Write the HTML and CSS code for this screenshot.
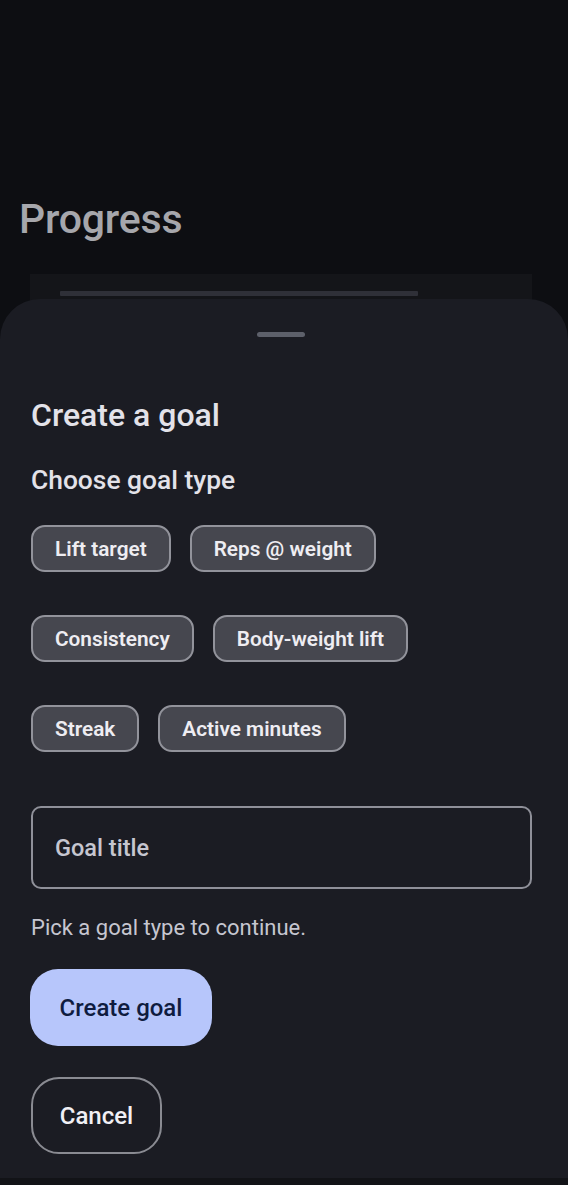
FILE: index.html
```html
<!DOCTYPE html>
<html>
<head>
<meta charset="utf-8">
<link rel="stylesheet" href="styles.css">
</head>
<body>
<div class="screen">
  <main class="page">
    <h1 class="page-title">Progress</h1>
    <div class="bg-card"><div class="bg-bar"></div></div>
  </main>
  <section class="sheet">
    <div class="handle"></div>
    <h2 class="sheet-title">Create a goal</h2>
    <h3 class="section-title">Choose goal type</h3>
    <div class="chips">
      <div class="chip-row">
        <button class="chip">Lift target</button>
        <button class="chip">Reps @ weight</button>
      </div>
      <div class="chip-row">
        <button class="chip">Consistency</button>
        <button class="chip">Body-weight lift</button>
      </div>
      <div class="chip-row">
        <button class="chip">Streak</button>
        <button class="chip">Active minutes</button>
      </div>
    </div>
    <div class="field"><span class="placeholder">Goal title</span></div>
    <p class="helper">Pick a goal type to continue.</p>
    <div class="actions">
      <button class="btn btn-primary">Create goal</button>
      <button class="btn btn-outline">Cancel</button>
    </div>
  </section>
  <div class="nav-strip"></div>
</div>
</body>
</html>
```
FILE: styles.css
```css
* { box-sizing: border-box; }
html, body {
  margin: 0;
  padding: 0;
  background: #0d0e12;
}
body {
  font-family: Roboto, "Noto Sans", sans-serif;
  width: 568px;
  height: 1185px;
  overflow: hidden;
}
.screen {
  position: relative;
  width: 568px;
  height: 1185px;
  background: #0d0e12;
}
.page {
  padding: 195px 0 0 0;
}
.page-title {
  margin: 0 0 0 19px;
  font-size: 41px;
  line-height: 48px;
  font-weight: 500;
  color: #a6a7ac;
  letter-spacing: -0.2px;
}
.bg-card {
  margin: 31px 36px 0 30px;
  height: 60px;
  background: #141519;
  padding: 17px 0 0 30px;
}
.bg-bar {
  width: 358px;
  height: 5px;
  background: #2f3038;
  border-radius: 1px;
}
.sheet {
  position: absolute;
  left: 0;
  right: 0;
  top: 299px;
  bottom: 7px;
  background: #1b1c23;
  border-radius: 40px 40px 0 0;
  padding: 33px 31px 0 31px;
  display: flex;
  flex-direction: column;
  align-items: flex-start;
}
.handle {
  margin-left: 226px;
  width: 48px;
  height: 5px;
  border-radius: 3px;
  background: #5d606a;
}
.sheet-title {
  margin: 58px 0 0 0;
  font-size: 32px;
  line-height: 40px;
  font-weight: 500;
  color: #e3e2e9;
}
.section-title {
  margin: 29px 0 0 0;
  font-size: 26.4px;
  line-height: 32px;
  font-weight: 500;
  color: #e3e2e9;
}
.chips {
  margin-top: 29px;
  display: flex;
  flex-direction: column;
  gap: 43px;
}
.chip-row {
  display: flex;
  gap: 19px;
}
.chip {
  height: 47px;
  padding: 0 22px;
  border: 2px solid #92939b;
  border-radius: 14px;
  background: #46474f;
  color: #eeedf2;
  font-family: Roboto, "Noto Sans", sans-serif;
  font-size: 20.8px;
  font-weight: 600;
  line-height: 24px;
}
.field {
  margin-top: 54px;
  width: 501px;
  height: 83px;
  border: 2px solid #8f9099;
  border-radius: 10px;
  padding: 0 22px;
  display: flex;
  align-items: center;
}
.placeholder {
  font-size: 23.5px;
  font-weight: 500;
  color: #c6c6d0;
}
.helper {
  margin: 25px 0 0 0;
  font-size: 22px;
  line-height: 28px;
  color: #c6c6d0;
}
.actions {
  margin-top: 27px;
  display: flex;
  flex-direction: column;
  align-items: flex-start;
  gap: 31px;
}
.btn {
  height: 77px;
  border-radius: 28px;
  font-family: Roboto, "Noto Sans", sans-serif;
  font-size: 24px;
  font-weight: 500;
  line-height: 28px;
  padding: 0;
}
.btn-primary {
  margin-left: -1px;
  width: 182px;
  background: #b7c6fb;
  border: none;
  color: #0f1c3f;
}
.btn-outline {
  width: 131px;
  background: transparent;
  border: 2px solid #8a8b92;
  color: #f1f0f5;
}
.nav-strip {
  position: absolute;
  left: 0;
  right: 0;
  bottom: 0;
  height: 7px;
  background: #121317;
}
```
